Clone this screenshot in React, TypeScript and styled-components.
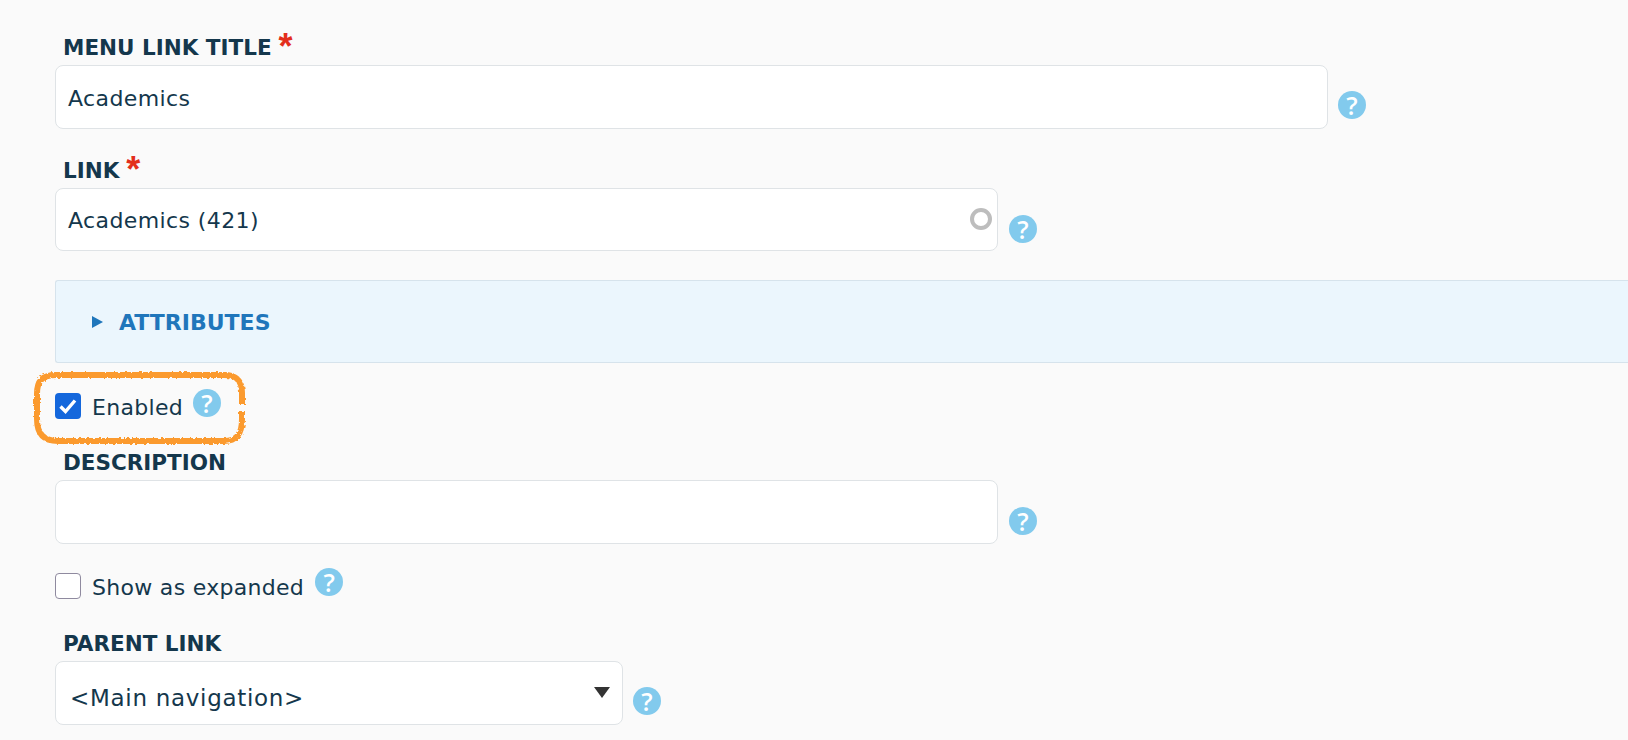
import React from "react";
import styled, { createGlobalStyle } from "styled-components";

const Global = createGlobalStyle`
  html, body { margin: 0; padding: 0; background: #fafafa; }
  body { width: 1628px; height: 740px; overflow: hidden; font-family: "DejaVu Sans", sans-serif; color: #14374c; }
`;

const Page = styled.div`
  position: relative;
  padding: 36px 0 0 55px;
  display: flex;
  flex-direction: column;
`;

const Label = styled.div<{ $top?: number }>`
  height: 29px;
  line-height: 24px;
  margin-top: ${(p) => p.$top ?? 0}px;
  padding-left: 8px;
  font-size: 21.5px;
  font-weight: 700;
  white-space: nowrap;
  color: #14374c;
`;

const Star = styled.span`
  color: #e32e1c;
  font-family: "Liberation Sans", sans-serif;
  font-size: 36px;
  font-weight: 700;
  line-height: 0;
  margin-left: 7px;
  position: relative;
  top: 4px;
`;

const Row = styled.div`
  display: flex;
  align-items: flex-end;
`;

const Input = styled.div<{ $w: number; $h: number }>`
  position: relative;
  box-sizing: border-box;
  width: ${(p) => p.$w}px;
  height: ${(p) => p.$h}px;
  background: #fff;
  border: 1.5px solid #dfe3e6;
  border-radius: 8px;
  padding: 2px 0 0 12px;
  display: flex;
  align-items: center;
  font-size: 22px;
  letter-spacing: 0.4px;
  color: #14374c;
  white-space: nowrap;
`;

const SelectText = styled.span`
  padding: 8px 0 0 2px;
  font-size: 23px;
  letter-spacing: 0.7px;
`;

const Help = styled.span<{ $bottom?: number; $left?: number }>`
  flex: none;
  display: inline-flex;
  align-items: center;
  justify-content: center;
  width: 28px;
  height: 28px;
  border-radius: 50%;
  background: #82caed;
  color: #fff;
  font-family: "Open Sans", sans-serif;
  font-size: 25px;
  font-weight: 600;
  line-height: 1;
  letter-spacing: 0;
  margin-bottom: ${(p) => p.$bottom ?? 0}px;
  margin-left: ${(p) => p.$left ?? 10}px;
`;

const Spinner = styled.span`
  position: absolute;
  right: 5px;
  top: 19px;
  width: 22px;
  height: 22px;
  box-sizing: border-box;
  border: 4px solid #bdbdbd;
  border-radius: 50%;
  filter: blur(0.7px);
`;

const Details = styled.div`
  box-sizing: border-box;
  margin-top: 29px;
  height: 83px;
  background: #ebf6fd;
  border: 1.5px solid #d6e3ec;
  border-right: none;
  border-radius: 3px 0 0 3px;
  display: flex;
  align-items: center;
  padding: 1px 0 0 36px;
  gap: 16px;
  color: #1f76bb;
  font-size: 22px;
  font-weight: 700;
`;

const Caret = styled.span`
  width: 0;
  height: 0;
  border-left: 11px solid #1f76bb;
  border-top: 6px solid transparent;
  border-bottom: 6px solid transparent;
`;

const CheckRow = styled.div<{ $top: number; $h: number }>`
  display: flex;
  align-items: center;
  margin-top: ${(p) => p.$top}px;
  height: ${(p) => p.$h}px;
  font-size: 22px;
  letter-spacing: 0.3px;
  color: #14374c;
`;

const CheckText = styled.span`
  position: relative;
  top: 1px;
`;

const Box = styled.span<{ $on?: boolean }>`
  flex: none;
  box-sizing: border-box;
  width: 26px;
  height: 26px;
  margin-right: 11px;
  border-radius: 4px;
  background: ${(p) => (p.$on ? "#1467dc" : "#fff")};
  border: ${(p) => (p.$on ? "none" : "1px solid #8f8a9f")};
  display: flex;
  align-items: center;
  justify-content: center;
`;

const RaisedHelp = styled(Help)<{ $lift: number }>`
  position: relative;
  top: -${(p) => p.$lift}px;
`;

const Arrow = styled.span`
  position: absolute;
  right: 12px;
  top: 25px;
  width: 0;
  height: 0;
  border-top: 11px solid #333;
  border-left: 8px solid transparent;
  border-right: 8px solid transparent;
`;

const Scribble = styled.svg`
  position: absolute;
  left: 30px;
  top: 367px;
  pointer-events: none;
`;

export default function App() {
  return (
    <>
      <Global />
      <Page>
        <Label>
          MENU LINK TITLE<Star>*</Star>
        </Label>
        <Row>
          <Input $w={1273} $h={64}>Academics</Input>
          <Help $bottom={10} $left={10}>?</Help>
        </Row>

        <Label $top={30}>
          LINK<Star>*</Star>
        </Label>
        <Row>
          <Input $w={943} $h={63}>
            Academics (421)
            <Spinner />
          </Input>
          <Help $bottom={8} $left={11}>?</Help>
        </Row>

        <Details>
          <Caret />
          ATTRIBUTES
        </Details>

        <CheckRow $top={30} $h={26}>
          <Box $on>
            <svg width="20" height="18" viewBox="0 0 20 18" fill="none">
              <path d="M2.5 9.5 L7.5 14.5 L17 3.5" stroke="#fff" strokeWidth="3.4" />
            </svg>
          </Box>
          <CheckText>Enabled</CheckText>
          <RaisedHelp $lift={3} $left={10}>?</RaisedHelp>
        </CheckRow>

        <Label $top={32}>DESCRIPTION</Label>
        <Row>
          <Input $w={943} $h={64} />
          <Help $bottom={9} $left={11}>?</Help>
        </Row>

        <CheckRow $top={29} $h={26}>
          <Box />
          <CheckText>Show as expanded</CheckText>
          <RaisedHelp $lift={4} $left={11}>?</RaisedHelp>
        </CheckRow>

        <Label $top={33}>PARENT LINK</Label>
        <Row>
          <Input $w={568} $h={64}>
            <SelectText>&lt;Main navigation&gt;</SelectText>
            <Arrow />
          </Input>
          <Help $bottom={10}>?</Help>
        </Row>

        <Scribble width="230" height="86" viewBox="0 0 230 86">
          <defs>
            <filter id="rough" x="-5%" y="-5%" width="110%" height="110%">
              <feTurbulence type="fractalNoise" baseFrequency="0.35" numOctaves="2" seed="4" />
              <feDisplacementMap in="SourceGraphic" scale="3.5" />
            </filter>
          </defs>
          <path
            d="M212 37 V26 C212 13 206 8 194 8 H26 C12 8 7 14 7 27 V52 C7 67 14 74 28 74 H194 C207 74 212 67 212 52 V44"
            fill="none"
            stroke="#fb9a2e"
            strokeWidth="6"
            filter="url(#rough)"
          />
        </Scribble>
      </Page>
    </>
  );
}
